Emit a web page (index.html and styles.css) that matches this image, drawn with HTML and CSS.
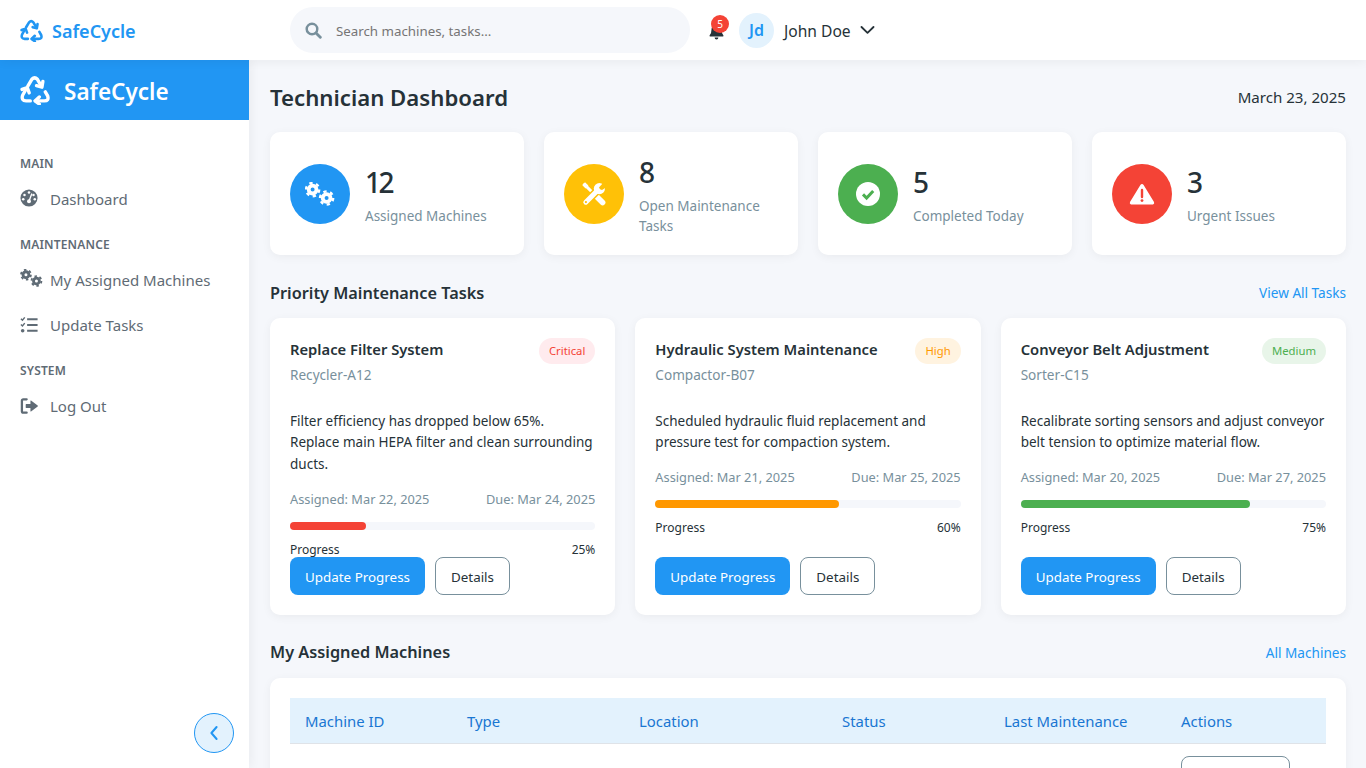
FILE: index.html
```html
<!DOCTYPE html>
<html lang="en">
<head>
<meta charset="utf-8">
<title>SafeCycle</title>
<link rel="stylesheet" href="styles.css">
</head>
<body>
<svg class="defs" width="0" height="0" aria-hidden="true">
  <defs>
    <symbol id="i-recycle" viewBox="0 0 32 32">
      <g fill="none" stroke="currentColor" stroke-width="3.6" stroke-linecap="round" stroke-linejoin="round">
        <path d="M8.5 11.5 L12.6 4.6 Q15.6 1.6 18.6 4.6 L22.6 11.5"/>
        <path d="M24.4 6.9 L23.4 13 L17.6 11.4"/>
        <path d="M6.6 14.8 L2.8 21.6 Q1 27.4 6.5 27.6 L11 27.6"/>
        <path d="M2.2 15.4 L7.8 13.4 L9.8 19"/>
        <path d="M27 18 L29.6 22.6 Q31 27.6 26 27.6 L17 27.6"/>
        <path d="M20.6 23.4 L16 27.6 L20.6 31"/>
      </g>
    </symbol>
    <symbol id="i-cogs" viewBox="0 0 30 24">
      <g fill="none" stroke="currentColor">
        <circle cx="7.6" cy="7.6" r="3.9" stroke-width="3.8"/>
        <circle cx="7.6" cy="7.6" r="6.6" stroke-width="2.4" stroke-dasharray="3.3 3.6"/>
        <circle cx="21.6" cy="16" r="3.9" stroke-width="3.8"/>
        <circle cx="21.6" cy="16" r="6.6" stroke-width="2.4" stroke-dasharray="3.3 3.6"/>
      </g>
    </symbol>
    <symbol id="i-gauge" viewBox="0 0 20 20">
      <circle cx="10" cy="10" r="9.5" fill="currentColor"/>
      <g fill="#fff">
        <circle cx="10" cy="4" r="1.4"/>
        <circle cx="5" cy="6.6" r="1.4"/>
        <circle cx="3.6" cy="11.4" r="1.4"/>
        <circle cx="16.4" cy="11.4" r="1.4"/>
        <circle cx="15" cy="6.6" r="1.4"/>
      </g>
      <path d="M13 5.6 L10.6 12" stroke="#fff" stroke-width="1.5" stroke-linecap="round"/>
      <circle cx="10" cy="13.6" r="2.2" fill="#fff"/>
    </symbol>
    <symbol id="i-tasks" viewBox="0 0 20 18">
      <g fill="none" stroke="currentColor">
        <path d="M7.5 3 H18.5 M7.5 9 H18.5 M7.5 15 H18.5" stroke-width="2.2"/>
        <path d="M1 2.4 L2.6 4 L5 1 M1 8.4 L2.6 10 L5 7" stroke-width="1.5"/>
      </g>
      <circle cx="2.8" cy="15" r="1.9" fill="currentColor"/>
    </symbol>
    <symbol id="i-logout" viewBox="0 0 20 18">
      <path d="M7 2 H3.5 Q2 2 2 3.5 V14.5 Q2 16 3.5 16 H7" fill="none" stroke="currentColor" stroke-width="2.4" stroke-linecap="round"/>
      <path d="M6.4 7 H11 V3.6 Q11 3 11.6 3.3 L18.6 8.4 Q19.2 9 18.6 9.6 L11.6 14.7 Q11 15 11 14.4 V11 H6.4 Q6 11 6 10.6 V7.4 Q6 7 6.4 7Z" fill="currentColor"/>
    </symbol>
    <symbol id="i-tools" viewBox="0 0 24 24">
      <g fill="none" stroke-linecap="round">
        <path d="M2.6 2.6 L12 12" stroke="#fff" stroke-width="3"/>
        <path d="M1.6 1.6 L5 5" stroke="#fff" stroke-width="4" stroke-linecap="butt"/>
        <path d="M13.5 13.5 L20.6 20.6" stroke="#fff" stroke-width="5.6"/>
        <path d="M4.2 19.8 L15 9" stroke="#FFC107" stroke-width="8" stroke-linecap="butt"/>
        <path d="M3.8 20.2 L15 9" stroke="#fff" stroke-width="5"/>
      </g>
      <circle cx="17.4" cy="6.6" r="5.6" fill="#fff"/>
      <path d="M17 5.6 L21 1 L25 1 L25 5 L20 8 Q17.6 8 17 5.6Z" fill="#FFC107"/>
      <circle cx="3.9" cy="20.1" r="1.1" fill="#FFC107"/>
    </symbol>
  </defs>
</svg>

<header class="topbar">
  <div class="brand">
    <svg class="brand-icon"><use href="#i-recycle"/></svg>
    <span>SafeCycle</span>
  </div>
  <div class="search">
    <svg class="search-icon" viewBox="0 0 18 18"><circle cx="7.4" cy="7.4" r="5.6" fill="none" stroke="currentColor" stroke-width="2.6"/><path d="M11.6 11.6 L16.2 16.2" stroke="currentColor" stroke-width="3" stroke-linecap="round"/></svg>
    <span class="search-text">Search machines, tasks...</span>
  </div>
  <div class="bell">
    <svg class="bell-icon" viewBox="0 0 16 18"><path d="M8 0.6 Q9 0.6 9 1.8 Q13.4 2.6 13.4 7.4 Q13.4 11.4 15.4 13.2 Q15.8 14.4 14.6 14.4 H1.4 Q0.2 14.4 0.6 13.2 Q2.6 11.4 2.6 7.4 Q2.6 2.6 7 1.8 Q7 0.6 8 0.6Z M6 15.4 H10 Q10 17.6 8 17.6 Q6 17.6 6 15.4Z" fill="currentColor"/></svg>
    <span class="bell-badge">5</span>
  </div>
  <div class="avatar">Jd</div>
  <span class="user-name">John Doe</span>
  <svg class="user-caret" viewBox="0 0 16 10"><path d="M1.6 1.8 L8 8 L14.4 1.8" fill="none" stroke="currentColor" stroke-width="2" stroke-linecap="round" stroke-linejoin="round"/></svg>
</header>

<div class="shell">
  <aside class="sidebar">
    <div class="side-brand">
      <svg class="side-brand-icon"><use href="#i-recycle"/></svg>
      <span>SafeCycle</span>
    </div>
    <nav class="side-nav">
      <div class="nav-section">
        <div class="nav-label">Main</div>
        <a class="nav-item"><svg class="nav-icon nav-icon-gauge"><use href="#i-gauge"/></svg><span>Dashboard</span></a>
      </div>
      <div class="nav-section">
        <div class="nav-label">Maintenance</div>
        <a class="nav-item"><svg class="nav-icon nav-icon-cogs"><use href="#i-cogs"/></svg><span>My Assigned Machines</span></a>
        <a class="nav-item"><svg class="nav-icon"><use href="#i-tasks"/></svg><span>Update Tasks</span></a>
      </div>
      <div class="nav-section">
        <div class="nav-label">System</div>
        <a class="nav-item"><svg class="nav-icon"><use href="#i-logout"/></svg><span>Log Out</span></a>
      </div>
    </nav>
    <button class="collapse" type="button" aria-label="Collapse sidebar">
      <svg viewBox="0 0 10 16"><path d="M7.6 2 L2.4 8 L7.6 14" fill="none" stroke="currentColor" stroke-width="2" stroke-linecap="round" stroke-linejoin="round"/></svg>
    </button>
  </aside>

  <main class="content">
    <div class="page-head">
      <h1>Technician Dashboard</h1>
      <span class="page-date">March 23, 2025</span>
    </div>

    <section class="stats">
      <div class="stat">
        <div class="stat-icon bg-blue"><svg class="icon-cogs"><use href="#i-cogs"/></svg></div>
        <div class="stat-body"><div class="stat-value">12</div><div class="stat-label">Assigned Machines</div></div>
      </div>
      <div class="stat">
        <div class="stat-icon bg-yellow"><svg class="icon-tools"><use href="#i-tools"/></svg></div>
        <div class="stat-body"><div class="stat-value">8</div><div class="stat-label">Open Maintenance Tasks</div></div>
      </div>
      <div class="stat">
        <div class="stat-icon bg-green">
          <svg class="icon-check" viewBox="0 0 24 24"><circle cx="12" cy="12" r="12" fill="#fff"/><path d="M7 12.4 L10.6 16 L17.2 9" fill="none" stroke="#4CAF50" stroke-width="3"/></svg>
        </div>
        <div class="stat-body"><div class="stat-value">5</div><div class="stat-label">Completed Today</div></div>
      </div>
      <div class="stat">
        <div class="stat-icon bg-red">
          <svg class="icon-warn" viewBox="0 0 26 22"><path d="M13 1 Q14 1 14.6 2 L25 19 Q25.8 21 24 21.4 H2 Q0.2 21 1 19 L11.4 2 Q12 1 13 1Z" fill="#fff"/><path d="M13 7 V14" stroke="#F44336" stroke-width="2.4" stroke-linecap="round"/><circle cx="13" cy="17.6" r="1.4" fill="#F44336"/></svg>
        </div>
        <div class="stat-body"><div class="stat-value">3</div><div class="stat-label">Urgent Issues</div></div>
      </div>
    </section>

    <div class="section-head">
      <h2>Priority Maintenance Tasks</h2>
      <a class="section-link">View All Tasks</a>
    </div>

    <section class="tasks">
      <article class="task">
        <div class="task-top">
          <div><h3>Replace Filter System</h3><div class="task-machine">Recycler-A12</div></div>
          <span class="pill pill-critical">Critical</span>
        </div>
        <p class="task-desc">Filter efficiency has dropped below 65%. Replace main HEPA filter and clean surrounding ducts.</p>
        <div class="task-dates"><span>Assigned: Mar 22, 2025</span><span>Due: Mar 24, 2025</span></div>
        <div class="progress">
          <div class="progress-fill fill-red" style="width:25%"></div>
          <div class="progress-text"><span>Progress</span><span>25%</span></div>
        </div>
        <div class="task-actions"><button class="btn btn-primary" type="button">Update Progress</button><button class="btn btn-ghost" type="button">Details</button></div>
      </article>
      <article class="task">
        <div class="task-top">
          <div><h3>Hydraulic System Maintenance</h3><div class="task-machine">Compactor-B07</div></div>
          <span class="pill pill-high">High</span>
        </div>
        <p class="task-desc">Scheduled hydraulic fluid replacement and pressure test for compaction system.</p>
        <div class="task-dates"><span>Assigned: Mar 21, 2025</span><span>Due: Mar 25, 2025</span></div>
        <div class="progress">
          <div class="progress-fill fill-orange" style="width:60%"></div>
          <div class="progress-text"><span>Progress</span><span>60%</span></div>
        </div>
        <div class="task-actions"><button class="btn btn-primary" type="button">Update Progress</button><button class="btn btn-ghost" type="button">Details</button></div>
      </article>
      <article class="task">
        <div class="task-top">
          <div><h3>Conveyor Belt Adjustment</h3><div class="task-machine">Sorter-C15</div></div>
          <span class="pill pill-medium">Medium</span>
        </div>
        <p class="task-desc">Recalibrate sorting sensors and adjust conveyor belt tension to optimize material flow.</p>
        <div class="task-dates"><span>Assigned: Mar 20, 2025</span><span>Due: Mar 27, 2025</span></div>
        <div class="progress">
          <div class="progress-fill fill-green" style="width:75%"></div>
          <div class="progress-text"><span>Progress</span><span>75%</span></div>
        </div>
        <div class="task-actions"><button class="btn btn-primary" type="button">Update Progress</button><button class="btn btn-ghost" type="button">Details</button></div>
      </article>
    </section>

    <div class="section-head section-head-machines">
      <h2>My Assigned Machines</h2>
      <a class="section-link">All Machines</a>
    </div>

    <section class="table-card">
      <table class="machines">
        <colgroup>
          <col class="c-id"><col class="c-type"><col class="c-loc"><col class="c-status"><col class="c-last"><col class="c-act">
        </colgroup>
        <thead>
          <tr><th>Machine ID</th><th>Type</th><th>Location</th><th>Status</th><th>Last Maintenance</th><th>Actions</th></tr>
        </thead>
        <tbody>
          <tr><td></td><td></td><td></td><td></td><td></td><td><button class="btn btn-ghost btn-row" type="button"></button></td></tr>
        </tbody>
      </table>
    </section>
  </main>
</div>
</body>
</html>
```

FILE: styles.css
```css
* { box-sizing: border-box; }
html, body { height: 100%; }
body {
  margin: 0;
  height: 768px;
  overflow: hidden;
  display: flex;
  flex-direction: column;
  background: #f5f7fb;
  color: #263238;
  font-family: "Noto Sans", "Open Sans", sans-serif;
  font-size: 14px;
}
.defs { position: absolute; }
h1, h2, h3, p { margin: 0; }

.topbar {
  flex: 0 0 60px;
  height: 60px;
  display: flex;
  align-items: center;
  background: #fff;
  box-shadow: 0 2px 10px rgba(0,0,0,.05);
  position: relative;
  z-index: 3;
}
.brand {
  width: 290px;
  padding-left: 20px;
  display: flex;
  align-items: center;
  gap: 9px;
  color: #2196F3;
  font-size: 18px;
  font-weight: 600;
}
.brand span { padding-top: 2px; }
.brand-icon { width: 23px; height: 23px; }
.search {
  width: 400px;
  height: 46px;
  border-radius: 23px;
  background: #f5f7fb;
  display: flex;
  align-items: center;
  padding-left: 15px;
  gap: 14px;
}
.search-icon { width: 17px; height: 17px; color: #78909C; }
.search-text { font-size: 13.3px; color: #757575; padding-top: 2px; }
.bell { margin-left: 19px; width: 16px; height: 18px; position: relative; }
.bell-icon { display: block; width: 15px; height: 17px; margin-top: 2px; color: #263238; }
.bell-badge {
  position: absolute;
  left: 2px;
  top: -6px;
  width: 18px;
  height: 18px;
  border-radius: 50%;
  background: #F44336;
  color: #fff;
  font-size: 10px;
  line-height: 18px;
  text-align: center;
}
.avatar {
  margin-left: 14px;
  width: 35px;
  height: 35px;
  border-radius: 50%;
  background: #E3F2FD;
  color: #2196F3;
  font-weight: 600;
  font-size: 16px;
  line-height: 35px;
  text-align: center;
}
.user-name { margin-left: 10px; font-size: 15.6px; color: #263238; padding-top: 2px; }
.user-caret { margin-left: 9px; width: 15px; height: 10px; color: #263238; }

.shell { flex: 1; display: flex; min-height: 0; }
.sidebar {
  flex: 0 0 249px;
  background: #fff;
  position: relative;
  box-shadow: 2px 0 10px rgba(0,0,0,.05);
  z-index: 2;
}
.side-brand {
  height: 60px;
  background: #2196F3;
  color: #fff;
  display: flex;
  align-items: center;
  gap: 14px;
  padding-left: 20px;
  font-size: 22.5px;
  font-weight: 600;
}
.side-brand span { padding-top: 2px; }
.side-brand-icon { width: 30px; height: 30px; }
.side-nav { padding-top: 35px; }
.nav-section { margin-bottom: 15px; }
.nav-label {
  padding-left: 20px;
  height: 18px;
  line-height: 18px;
  margin-bottom: 3px;
  font-size: 12px;
  font-weight: 600;
  letter-spacing: .15px;
  text-transform: uppercase;
  color: #5f6b75;
}
.nav-item {
  height: 45px;
  display: flex;
  align-items: center;
  padding-left: 20px;
  font-size: 15px;
  color: #5f6b75;
}
.nav-icon { width: 19px; height: 18px; margin-right: 11px; flex: none; }
.nav-icon-gauge { width: 18px; margin-right: 12px; margin-bottom: 2px; }
.nav-icon-cogs { width: 23px; margin-right: 7px; margin-bottom: 3px; }
.collapse {
  position: absolute;
  right: 15px;
  bottom: 15px;
  width: 40px;
  height: 40px;
  padding: 0;
  border: 1px solid #2196F3;
  border-radius: 50%;
  background: #E3F2FD;
  color: #2196F3;
  display: flex;
  align-items: center;
  justify-content: center;
}
.collapse svg { width: 10px; height: 16px; }

.content {
  flex: 1;
  min-width: 0;
  padding: 20px 20px 20px 21px;
  overflow: hidden;
}
.page-head {
  display: flex;
  justify-content: space-between;
  align-items: center;
  height: 34px;
  margin-bottom: 18px;
}
h1 { font-size: 22.2px; font-weight: 600; color: #263238; }
.page-date { font-size: 15.1px; color: #263238; }

.stats {
  display: grid;
  grid-template-columns: repeat(4, 1fr);
  gap: 20px;
  margin-bottom: 24px;
}
.stat {
  background: #fff;
  border-radius: 10px;
  box-shadow: 0 2px 10px rgba(0,0,0,.05);
  padding: 19px 20px;
  display: flex;
  align-items: center;
  gap: 15px;
}
.stat-body { padding-top: 2px; }
.stat-icon {
  width: 60px;
  height: 60px;
  flex: none;
  border-radius: 50%;
  display: flex;
  align-items: center;
  justify-content: center;
  color: #fff;
}
.bg-blue { background: #2196F3; }
.bg-yellow { background: #FFC107; }
.bg-green { background: #4CAF50; }
.bg-red { background: #F44336; }
.icon-cogs { width: 30px; height: 24px; }
.icon-tools { width: 24px; height: 24px; }
.icon-check { width: 24px; height: 24px; }
.icon-warn { width: 26px; height: 22px; }
.stat-value { font-size: 28px; font-weight: 500; letter-spacing: -2.5px; line-height: 38px; margin-bottom: 5px; }
.stat-label { font-size: 13.5px; line-height: 20px; color: #78909C; }

.section-head {
  display: flex;
  justify-content: space-between;
  align-items: center;
  height: 27px;
  margin-bottom: 12px;
}
.section-head-machines { margin-top: 24px; }
h2 { font-size: 16.3px; font-weight: 600; color: #263238; }
.section-link { font-size: 13.6px; color: #2196F3; }

.tasks {
  display: grid;
  grid-template-columns: repeat(3, 1fr);
  gap: 20px;
}
.task {
  background: #fff;
  border-radius: 10px;
  box-shadow: 0 2px 10px rgba(0,0,0,.05);
  padding: 20px;
  display: flex;
  flex-direction: column;
}
.task-top { display: flex; justify-content: space-between; align-items: flex-start; margin-bottom: 25.5px; }
h3 { font-size: 14.75px; font-weight: 600; line-height: 22px; color: #263238; }
.task-machine { font-size: 13.6px; line-height: 20px; margin-top: 5px; color: #78909C; }
.pill {
  height: 26px;
  line-height: 26px;
  padding: 0 10px;
  border-radius: 13px;
  font-size: 11.3px;
  flex: none;
}
.pill-critical { background: #FFEBEE; color: #F44336; }
.pill-high { background: #FFF3E0; color: #FF9800; }
.pill-medium { background: #E8F5E9; color: #4CAF50; }
.task-desc { font-size: 13.5px; line-height: 21.6px; color: #263238; margin-bottom: 14.5px; }
.task-dates {
  display: flex;
  justify-content: space-between;
  font-size: 12.8px;
  line-height: 19px;
  color: #78909C;
  margin-bottom: 13px;
}
.progress {
  position: relative;
  height: 8px;
  border-radius: 4px;
  background: #f5f7fb;
  margin-bottom: 27px;
}
.progress-fill { height: 8px; border-radius: 4px; }
.fill-red { background: #F44336; }
.fill-orange { background: #FF9800; }
.fill-green { background: #4CAF50; }
.progress-text {
  position: absolute;
  left: 0;
  right: 0;
  top: 19px;
  display: flex;
  justify-content: space-between;
  font-size: 12px;
  line-height: 18px;
  color: #263238;
}
.task-actions { margin-top: auto; display: flex; gap: 10px; }
.btn {
  height: 38px;
  border-radius: 8px;
  padding: 2px 15px 0;
  font-family: inherit;
  font-size: 13.4px;
}
.btn-primary { background: #2196F3; border: 0; color: #fff; }
.btn-ghost { background: #fff; border: 1px solid #78909C; color: #263238; }
.btn-row { width: 109px; display: block; }

.table-card {
  background: #fff;
  border-radius: 10px;
  box-shadow: 0 2px 10px rgba(0,0,0,.05);
  padding: 20px;
}
.machines { width: 100%; border-collapse: collapse; table-layout: fixed; }
.c-id { width: 162px; }
.c-type { width: 172px; }
.c-loc { width: 203px; }
.c-status { width: 162px; }
.c-last { width: 177px; }
.c-act { width: 160px; }
.machines th {
  height: 46px;
  padding: 0 15px;
  text-align: left;
  font-weight: 400;
  font-size: 14.9px;
  background: #E3F2FD;
  color: #1976D2;
  border-bottom: 1px solid #dfe3e8;
}
.machines td { padding: 12px 15px; }
```
